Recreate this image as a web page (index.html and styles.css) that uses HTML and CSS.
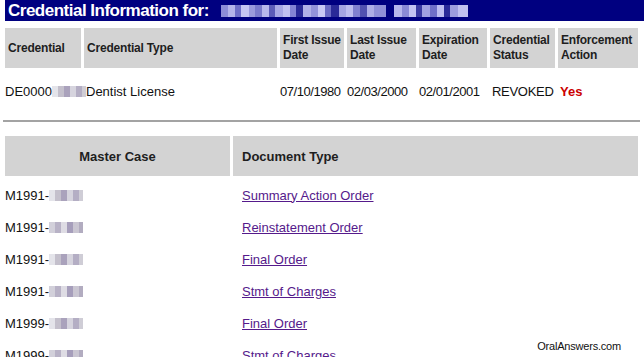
FILE: index.html
```html
<!DOCTYPE html>
<html lang="en">
<head>
    <meta charset="UTF-8">
    <meta name="viewport" content="width=device-width, initial-scale=1.0">
    <title>Credential Information</title>
    <link rel="stylesheet" href="styles.css">
</head>
<body>
    <div class="page">
        <div class="title-bar">
            <span class="title">Credential Information for:</span>
            <span class="name-mask"></span>
            <span class="name-mask last"></span>
        </div>

        <table class="cred-table">
            <tr>
                <th class="col-cred">Credential</th>
                <th class="col-type">Credential Type</th>
                <th class="col-first">First Issue Date</th>
                <th class="col-last">Last Issue Date</th>
                <th class="col-exp">Expiration Date</th>
                <th class="col-status">Credential Status</th>
                <th class="col-action">Enforcement Action</th>
            </tr>
            <tr>
                <td>DE0000<span class="id-mask"></span></td>
                <td>Dentist License</td>
                <td class="date">07/10/1980</td>
                <td class="date">02/03/2000</td>
                <td class="date">02/01/2001</td>
                <td class="status">REVOKED</td>
                <td class="action-yes">Yes</td>
            </tr>
        </table>

        <hr class="divider">

        <table class="case-table">
            <tr>
                <th class="col-case">Master Case</th>
                <th class="col-doc">Document Type</th>
            </tr>
            <tr>
                <td>M1991-<span class="id-mask"></span></td>
                <td class="doc"><a href="#">Summary Action Order</a></td>
            </tr>
            <tr>
                <td>M1991-<span class="id-mask alt"></span></td>
                <td class="doc"><a href="#">Reinstatement Order</a></td>
            </tr>
            <tr>
                <td>M1991-<span class="id-mask"></span></td>
                <td class="doc"><a href="#">Final Order</a></td>
            </tr>
            <tr>
                <td>M1991-<span class="id-mask alt"></span></td>
                <td class="doc"><a href="#">Stmt of Charges</a></td>
            </tr>
            <tr>
                <td>M1999-<span class="id-mask"></span></td>
                <td class="doc"><a href="#">Final Order</a></td>
            </tr>
            <tr>
                <td>M1999-<span class="id-mask alt"></span></td>
                <td class="doc"><a href="#">Stmt of Charges</a></td>
            </tr>
        </table>

        <div class="watermark">OralAnswers.com</div>
    </div>
</body>
</html>
```

FILE: styles.css
```css
html, body {
    margin: 0;
    padding: 0;
    background-color: #fff;
    overflow: hidden;
}
body {
    font-family: "Liberation Sans", Arial, sans-serif;
    font-size: 13px;
    color: #111;
}
.page {
    position: relative;
    height: 357px;
    padding: 0 3px 0 2px;
}

/* navy heading strip */
.title-bar {
    background-color: #000080;
    height: 21px;
    margin: 0 -3px 0 3px;
    padding-left: 3px;
    display: flex;
    align-items: center;
    white-space: nowrap;
}
.title {
    color: #fff;
    font-size: 17px;
    font-weight: bold;
    letter-spacing: -0.5px;
    line-height: 21px;
}
.name-mask {
    display: inline-block;
    height: 12px;
    width: 165px;
    margin-left: 12px;
    background: linear-gradient(90deg,
        #8c8cd8 0 7px, #b4b4ea 7px 14px, #6e6ec8 14px 20px, #c6c6f2 20px 28px,
        #9a9adc 28px 34px, #7a7acc 34px 41px, #b8b8ec 41px 48px, #5c5cb8 48px 54px,
        #a8a8e4 54px 62px, #c2c2f0 62px 69px, #8484d4 69px 75px, #2a2a98 75px 82px,
        #b0b0e8 82px 90px, #9292da 90px 97px, #c8c8f4 97px 104px, #6a6ac4 104px 110px,
        #2a2a98 110px 118px, #a4a4e2 118px 125px, #bcbcee 125px 132px, #8080d0 132px 139px,
        #5050b0 139px 146px, #aeaee6 146px 153px, #9090d8 153px 165px);
    filter: blur(0.6px);
}
.name-mask.last {
    width: 74px;
    margin-left: 8px;
    background: linear-gradient(90deg,
        #b6b6ec 0 8px, #8a8ad6 8px 15px, #c4c4f2 15px 22px, #3a3aa2 22px 28px,
        #a2a2e2 28px 36px, #7070c8 36px 43px, #bebef0 43px 50px, #2a2a98 50px 56px,
        #9c9cde 56px 64px, #c0c0f0 64px 74px);
}

/* shared table look */
table {
    border-collapse: separate;
    border-spacing: 3px;
    table-layout: fixed;
    width: 639px;
}
th {
    background-color: #d3d3d3;
    color: #1e1e1e;
    font-weight: bold;
    text-align: left;
    vertical-align: middle;
    height: 40px;
    padding: 0 3px;
}
td {
    white-space: nowrap;
    vertical-align: middle;
    padding: 0 1px 0 2px;
}

.cred-table {
    margin-top: 4px;
}
.cred-table th {
    font-size: 12px;
    letter-spacing: -0.2px;
    line-height: 15px;
}
.cred-table td {
    height: 40px;
}
.col-cred { width: 70px; }
.col-type { width: 187px; }
.col-first { width: 58px; }
.col-last { width: 63px; }
.col-exp { width: 62px; }
.col-status { width: 59px; }
.col-action { width: 74px; }
.cred-table td:first-child {
    padding-left: 0;
}
.cred-table td.date {
    letter-spacing: -0.45px;
    padding-left: 0;
}
.cred-table td.status {
    letter-spacing: -0.3px;
}
.action-yes {
    color: #cc0000;
    font-weight: bold;
}

.id-mask {
    display: inline-block;
    width: 34px;
    height: 11px;
    vertical-align: -1px;
    background: linear-gradient(90deg,
        #e4e4ea 0 6px, #c4c0cc 6px 12px, #aaa2bc 12px 18px, #d6d4de 18px 24px,
        #b4aec4 24px 30px, #cfcdd6 30px 34px);
    filter: blur(0.7px);
}
.id-mask.alt {
    background: linear-gradient(90deg,
        #d2d0da 0 6px, #b8b2c6 6px 12px, #dedce4 12px 18px, #a69ebb 18px 24px,
        #cac6d2 24px 30px, #b2acc0 30px 34px);
}

.divider {
    border: none;
    border-top: 2px solid #a3a3a3;
    margin: 6px 1px 11px 1px;
    height: 0;
}

.case-table th {
    font-size: 13px;
}
.col-case {
    width: 219px;
    text-align: center;
}
.col-doc {
    width: 393px;
    padding-left: 9px;
}
.case-table td {
    height: 26px;
    padding: 3px 0 0 0;
}
.case-table td.doc {
    padding-left: 9px;
}
.case-table a {
    color: #551a8b;
    text-decoration: underline;
}

.watermark {
    position: absolute;
    right: 21px;
    bottom: 5px;
    font-size: 11px;
    letter-spacing: -0.2px;
    color: #111;
    background-color: #fff;
    padding: 0 2px;
}
```
